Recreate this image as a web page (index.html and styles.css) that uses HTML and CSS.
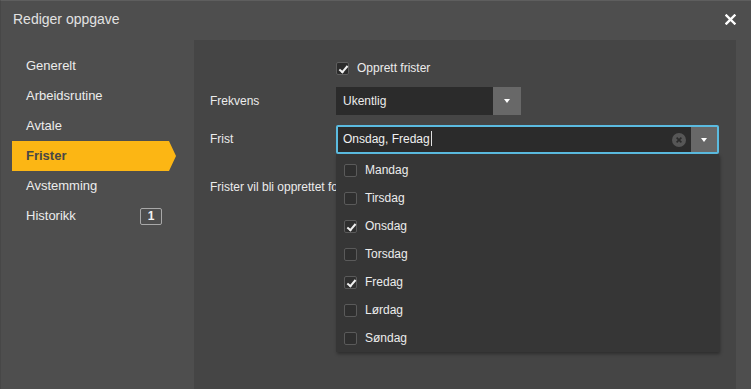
FILE: index.html
```html
<!DOCTYPE html>
<html lang="no">
<head>
    <meta charset="UTF-8">
    <meta name="viewport" content="width=device-width, initial-scale=1.0">
    <title>Rediger oppgave</title>
    <link rel="stylesheet" href="styles.css">
</head>
<body>
    <div class="dialog">
        <!-- Title bar -->
        <div class="titlebar">
            <span class="title">Rediger oppgave</span>
            <svg class="close" width="11" height="11" viewBox="0 0 11 11">
                <path d="M1.5 1.5 L9.5 9.5 M9.5 1.5 L1.5 9.5" stroke="#fff" stroke-width="2.4" stroke-linecap="square"/>
            </svg>
        </div>

        <div class="dialog-body">
            <!-- Sidebar navigation -->
            <ul class="nav">
                <li class="nav-item">Generelt</li>
                <li class="nav-item">Arbeidsrutine</li>
                <li class="nav-item">Avtale</li>
                <li class="nav-item active">Frister</li>
                <li class="nav-item">Avstemming</li>
                <li class="nav-item">Historikk <span class="badge">1</span></li>
            </ul>

            <!-- Form panel -->
            <div class="panel">
                <div class="row row-check">
                    <div class="row-label"></div>
                    <label class="check">
                        <span class="box checked"></span>
                        Opprett frister
                    </label>
                </div>

                <div class="row row-select">
                    <div class="row-label">Frekvens</div>
                    <div class="select">
                        <span class="select-value">Ukentlig</span>
                        <span class="select-btn"><span class="caret"></span></span>
                    </div>
                </div>

                <div class="row row-multi">
                    <div class="row-label">Frist</div>
                    <div class="multi">
                        <div class="multi-field">
                            <span class="multi-value">Onsdag, Fredag<span class="cursor"></span></span>
                            <span class="clear">
                                <svg width="14" height="14" viewBox="0 0 14 14">
                                    <circle cx="7" cy="7" r="7" fill="#565656"/>
                                    <path d="M4.6 4.6 L9.4 9.4 M9.4 4.6 L4.6 9.4" stroke="#2b2b2b" stroke-width="1.6"/>
                                </svg>
                            </span>
                            <span class="select-btn"><span class="caret"></span></span>
                        </div>

                        <ul class="dropdown">
                            <li class="option"><span class="box"></span>Mandag</li>
                            <li class="option"><span class="box"></span>Tirsdag</li>
                            <li class="option"><span class="box checked"></span>Onsdag</li>
                            <li class="option"><span class="box"></span>Torsdag</li>
                            <li class="option"><span class="box checked"></span>Fredag</li>
                            <li class="option"><span class="box"></span>Lørdag</li>
                            <li class="option"><span class="box"></span>Søndag</li>
                        </ul>
                    </div>
                </div>

                <!-- partly hidden by the open dropdown -->
                <p class="info">Frister vil bli opprettet for</p>
            </div>
        </div>
    </div>
</body>
</html>
```

FILE: styles.css
```css
body {
    margin: 0;
    background-color: #4e4e4e;
    font-family: 'Liberation Sans', Arial, sans-serif;
    color: #e6e6e6;
    overflow: hidden;
}

.dialog {
    height: 389px;
    border-top: 1px solid #5e5e5e;
    border-left: 1px solid #474747;
    box-sizing: border-box;
    display: flex;
    flex-direction: column;
}

.titlebar {
    height: 39px;
    display: flex;
    align-items: center;
    justify-content: space-between;
    padding: 0 15px 3px 12px;
    box-sizing: border-box;
}

.title {
    font-size: 14px;
    color: #e2e2e2;
}

.close {
    display: block;
}

.dialog-body {
    flex: 1;
    display: flex;
}

/* Sidebar */
.nav {
    list-style: none;
    margin: 0 0 0 11px;
    padding: 11px 0 0;
    width: 182px;
}

.nav-item {
    width: 164px;
    height: 30px;
    line-height: 30px;
    padding: 0 14px;
    box-sizing: border-box;
    font-size: 13px;
    color: #ececec;
    display: flex;
    align-items: center;
    justify-content: space-between;
}

.nav-item.active {
    background-color: #fcb614;
    color: #474747;
    font-weight: bold;
    clip-path: polygon(0 0, 157px 0, 164px 50%, 157px 100%, 0 100%);
}

.badge {
    width: 22px;
    height: 17px;
    box-sizing: border-box;
    border: 1px solid #a8a8a8;
    border-radius: 2px;
    font-size: 12px;
    font-weight: bold;
    line-height: 15px;
    text-align: center;
    color: #f2f2f2;
}

/* Panel */
.panel {
    flex: 1;
    margin-right: 15px;
    background-color: #454545;
    padding: 14px 16px 0;
    font-size: 12px;
    color: #ececec;
}

.row {
    display: flex;
    align-items: center;
}

.row-label {
    width: 126px;
    flex-shrink: 0;
}

.row-check {
    height: 28px;
}

.row-select {
    margin-top: 5px;
    height: 28px;
}

.row-multi {
    margin-top: 10px;
    align-items: flex-start;
}

.row-multi .row-label {
    line-height: 29px;
}

.check {
    display: flex;
    align-items: center;
    gap: 8px;
}

.box {
    width: 13px;
    height: 13px;
    box-sizing: border-box;
    border: 1px solid #5a5a5a;
    border-radius: 2px;
    background-color: #2f2f2f;
    position: relative;
    flex-shrink: 0;
}

.check .box {
    background-color: #2b2b2b;
    border-color: #5e5e5e;
}

.box.checked::after {
    content: '';
    position: absolute;
    left: 4px;
    top: 1px;
    width: 3px;
    height: 7px;
    border: solid #f0f0f0;
    border-width: 0 2px 2px 0;
    transform: rotate(40deg);
}

.select {
    width: 185px;
    height: 28px;
    display: flex;
    background-color: #2b2b2b;
}

.select-value {
    flex: 1;
    line-height: 28px;
    padding-left: 7px;
}

.select-btn {
    width: 28px;
    background-color: #686868;
    display: flex;
    align-items: center;
    justify-content: center;
}

.caret {
    width: 0;
    height: 0;
    border-left: 3.5px solid transparent;
    border-right: 3.5px solid transparent;
    border-top: 4px solid #fff;
}

.multi {
    position: relative;
    width: 383px;
}

.multi-field {
    height: 29px;
    box-sizing: border-box;
    border: 2px solid #5bbbe0;
    border-radius: 2px;
    background-color: #2b2b2b;
    display: flex;
}

.multi-value {
    flex: 1;
    line-height: 25px;
    padding-left: 5px;
    color: #f0f0f0;
}

.cursor {
    display: inline-block;
    width: 1px;
    height: 15px;
    background-color: #e0e0e0;
    vertical-align: -3px;
    margin-left: 1px;
}

.clear {
    display: flex;
    align-items: center;
    padding-right: 5px;
}

.clear svg {
    display: block;
}

.multi-field .select-btn {
    width: 26px;
}

/* Dropdown list overlaying the form */
.dropdown {
    position: absolute;
    top: 29px;
    left: 0;
    width: 383px;
    margin: 0;
    padding: 2px 0 0;
    list-style: none;
    background-color: #363636;
    box-shadow: 1px 2px 3px rgba(0, 0, 0, 0.35);
    z-index: 10;
}

.option {
    height: 28px;
    display: flex;
    align-items: center;
    gap: 8px;
    padding-left: 8px;
    color: #ececec;
}

.info {
    margin: 25px 0 0;
    line-height: 16px;
    white-space: nowrap;
}
```
